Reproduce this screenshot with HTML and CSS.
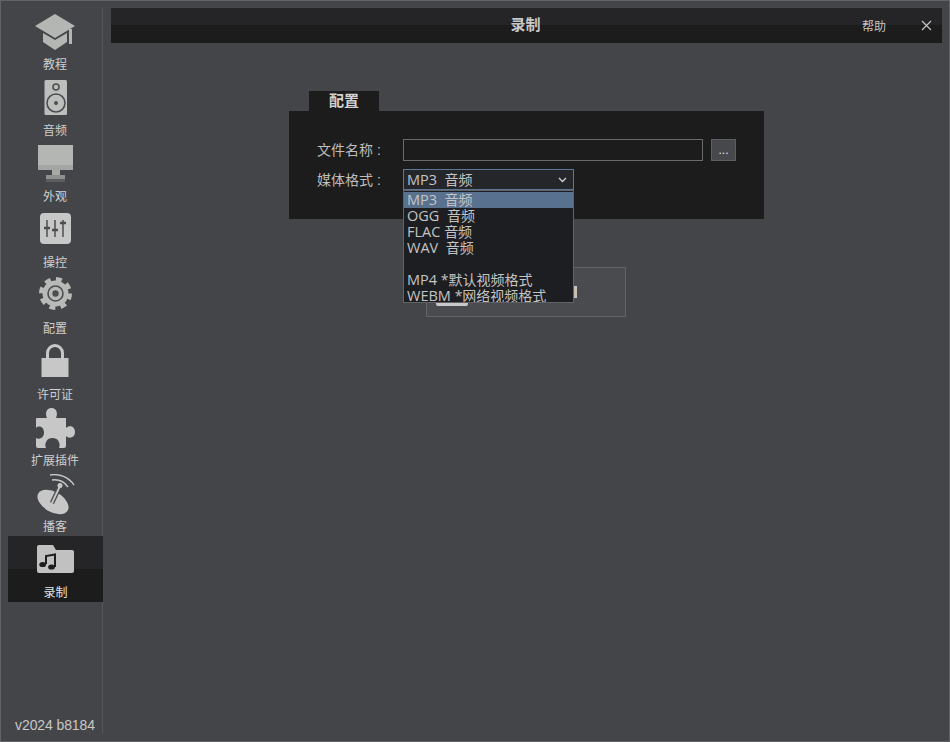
FILE: index.html
```html
<!DOCTYPE html>
<html lang="zh-CN">
<head>
  <meta charset="UTF-8">
  <title>录制</title>
  <link rel="stylesheet" href="styles.css">
</head>
<body>
  <div class="window">
    <nav class="sidebar">
      <div class="nav-list">
        <div class="nav-item">
          <svg class="nav-icon" viewBox="0 0 44 44"><path d="M22 2 L42 14 L22 26 L2 14 Z" fill="#b4b6b3"/><path d="M10 21 L22 28 L34 21 V30 L22 38 L10 30 Z" fill="#b4b6b3"/><rect x="36" y="17" width="3" height="15" fill="#b4b6b3"/></svg>
          <span>教程</span>
        </div>
        <div class="nav-item">
          <svg class="nav-icon" viewBox="0 0 44 44"><rect x="11.500" y="2" width="22.500" height="35" rx="1.500" fill="#bdbfbd"/><circle cx="23" cy="9" r="3" fill="none" stroke="#4c4d50" stroke-width="1.600"/><circle cx="23" cy="25" r="9" fill="none" stroke="#4c4d50" stroke-width="1.600"/><circle cx="23" cy="25" r="2" fill="#4c4d50"/></svg>
          <span>音频</span>
        </div>
        <div class="nav-item">
          <svg class="nav-icon" viewBox="0 0 44 44"><rect x="5" y="1" width="35" height="25" fill="#b4b6b3"/><rect x="5" y="21" width="35" height="5" fill="#a4a6a4"/><rect x="19" y="26" width="8" height="5" fill="#a8aaa8"/><rect x="13" y="31" width="19" height="4" fill="#8e908f"/><rect x="13" y="35" width="19" height="3" fill="#5c5d5f"/></svg>
          <span>外观</span>
        </div>
        <div class="nav-item">
          <svg class="nav-icon" viewBox="0 0 44 44"><rect x="7" y="3" width="31" height="31" rx="4" fill="#c6c7c6"/><path d="M14 10 V27 M22 10 V27 M30 10 V27" stroke="#4c4d50" stroke-width="1.500"/><path d="M11 18 H17 M19 20 H25 M27 13 H33" stroke="#4c4d50" stroke-width="2.500"/></svg>
          <span>操控</span>
        </div>
        <div class="nav-item">
          <svg class="nav-icon" viewBox="0 0 44 44"><circle cx="22.500" cy="17.500" r="13" fill="#b8bab8"/><circle cx="22.500" cy="17.500" r="14.500" fill="none" stroke="#b8bab8" stroke-width="4" stroke-dasharray="6 5.390"/><circle cx="22.500" cy="17.500" r="7.500" fill="none" stroke="#4c4d50" stroke-width="1.600"/><circle cx="22.500" cy="17.500" r="3.200" fill="#4c4d50"/></svg>
          <span>配置</span>
        </div>
        <div class="nav-item">
          <svg class="nav-icon" viewBox="0 0 44 44"><path d="M14.500 16 V11 A7.500 7.500 0 0 1 29.500 11 V16" fill="none" stroke="#c6c7c6" stroke-width="3"/><rect x="8.500" y="16" width="27" height="19" fill="#c6c7c6"/></svg>
          <span>许可证</span>
        </div>
        <div class="nav-item">
          <svg class="nav-icon" viewBox="0 0 44 44"><path d="M4 10 H14 C12 6 13 0 18.500 0 C24 0 25 6 23 10 H33 V20 C36 17 42 18 42 24 C42 30 36 31 33 28 V38 Q33 40 31 40 H26 C28 35 25 30 19.500 30 C14 30 11 35 13 40 H5 Q3 40 3 38 V30 C6 32 11 30 11 24.500 C11 19 6 17 3 20 V11 Q3 10 4 10 Z" fill="#c6c7c6"/></svg>
          <span>扩展插件</span>
        </div>
        <div class="nav-item">
          <svg class="nav-icon" viewBox="0 0 44 44"><ellipse cx="20" cy="28" rx="17" ry="10" transform="rotate(30 20 28)" fill="#c6c7c6"/><path d="M19 29 L27 12" stroke="#4c4d50" stroke-width="4.500"/><path d="M19 29 L27 12" stroke="#c6c7c6" stroke-width="1.800"/><circle cx="27" cy="11.500" r="2.500" fill="#c6c7c6"/><path d="M19 6 A17 17 0 0 1 35 13 M17 1 A24 24 0 0 1 41 11" fill="none" stroke="#c6c7c6" stroke-width="1.400"/></svg>
          <span>播客</span>
        </div>
        <div class="nav-item nav-item-active">
          <svg class="nav-icon" viewBox="0 0 44 44"><path d="M5 5 Q3 5 3 7 V31 Q3 33 5 33 H38 Q40 33 40 31 V12 Q40 10 38 10 H22 L19 5 Z" fill="#c0c1c0"/><path d="M12 24 V16 L21 14.500 V27" fill="none" stroke="#1e1e1f" stroke-width="2"/><ellipse cx="8.700" cy="24.500" rx="3.400" ry="2.600" fill="#1e1e1f"/><ellipse cx="17.500" cy="27" rx="3.400" ry="2.600" fill="#1e1e1f"/></svg>
          <span>录制</span>
        </div>
      </div>
      <div class="version">v2024 b8184</div>
    </nav>

    <main class="content">
      <header class="titlebar">
        <div class="title">录制</div>
        <div class="help">帮助</div>
        <svg class="close" viewBox="0 0 11 11"><path d="M1 1 L10 10 M10 1 L1 10" stroke="#c4c4c4" stroke-width="1.200"/></svg>
      </header>

      <section class="config">
        <div class="tab">配置</div>
        <div class="panel">
          <div class="row">
            <label>文件名称 :</label>
            <div class="text-input"></div>
            <button class="browse">...</button>
          </div>
          <div class="row">
            <label>媒体格式 :</label>
            <div class="select">
              <div class="select-box">
                <span><span class="latin">MP3&nbsp; </span>音频</span>
                <svg class="chevron" viewBox="0 0 9 6"><path d="M1 1 L4.500 4.500 L8 1" fill="none" stroke="#d0d0d0" stroke-width="1.300"/></svg>
              </div>
              <ul class="dropdown">
                <li class="selected"><span class="latin">MP3&nbsp; </span>音频</li>
                <li><span class="latin">OGG&nbsp; </span>音频</li>
                <li><span class="latin">FLAC </span>音频</li>
                <li><span class="latin">WAV&nbsp; </span>音频</li>
                <li>&nbsp;</li>
                <li><span class="latin">MP4 </span>*默认视频格式</li>
                <li><span class="latin">WEBM </span>*网络视频格式</li>
              </ul>
            </div>
          </div>
        </div>
        <div class="start-btn">
          <div class="start-mark"></div>
          <div class="start-glyph"></div>
        </div>
      </section>
    </main>
  </div>
</body>
</html>
```

FILE: styles.css
```css
* {
  box-sizing: border-box;
}

body {
  margin: 0;
  background-color: #444549;
  color: #c8c8c8;
  font-family: 'Liberation Sans', 'Noto Sans CJK SC', sans-serif;
  font-size: 12px;
  overflow: hidden;
}

.window {
  width: 950px;
  height: 742px;
  display: flex;
  border: 1px solid #626367;
  padding: 7px 7px 8px 7px;
}

.sidebar {
  width: 95px;
  flex: none;
  display: flex;
  flex-direction: column;
  justify-content: space-between;
  border-right: 1px solid #55565a;
}

.nav-list {
  display: flex;
  flex-direction: column;
}

.nav-item {
  height: 66px;
  display: flex;
  flex-direction: column;
  align-items: center;
  text-align: center;
  font-size: 12px;
  line-height: 16px;
  color: #cfcfcf;
}

.nav-icon {
  width: 44px;
  height: 44px;
  margin: 4px 0 0;
  flex: none;
  display: block;
}

.nav-item span {
  display: block;
  margin-top: 1px;
}

.nav-item-active {
  background: linear-gradient(#252527 50%, #1c1c1c 50%);
  width: 95px;
  color: #e4e4e4;
}

.version {
  text-align: center;
  font-size: 14px;
  letter-spacing: -0.1px;
  line-height: 16px;
  color: #c8c8c8;
}

.content {
  flex: 1;
  padding-left: 8px;
  min-width: 0;
}

.titlebar {
  height: 35px;
  display: flex;
  align-items: center;
  position: relative;
  background: linear-gradient(#252527 50%, #1c1c1c 50%);
  padding-right: 10px;
}

.title {
  position: absolute;
  left: 0;
  right: 2px;
  top: 7px;
  line-height: 20px;
  text-align: center;
  font-size: 15px;
  font-weight: bold;
  color: #c8c8c8;
}

.help {
  margin-left: auto;
  color: #c4c4c4;
  margin-right: 35px;
}

.close {
  width: 11px;
  height: 11px;
}

.config {
  width: 475px;
  margin: 48px 0 0 178px;
  display: flex;
  flex-direction: column;
}

.tab {
  width: 70px;
  height: 20px;
  margin-left: 20px;
  background-color: #1c1c1c;
  text-align: center;
  font-size: 15px;
  font-weight: bold;
  line-height: 20px;
  color: #d2d2d2;
}

.panel {
  height: 108px;
  background-color: #1c1c1c;
  padding: 28px 28px 0;
  display: flex;
  flex-direction: column;
  gap: 8px;
}

.row {
  display: flex;
  align-items: flex-start;
}

.row label {
  width: 86px;
  flex: none;
  font-size: 14px;
  line-height: 22px;
  color: #bebebe;
}

.text-input {
  width: 300px;
  height: 22px;
  border: 1px solid #6a6b6e;
  background-color: #1c1c1c;
}

.browse {
  width: 25px;
  height: 22px;
  margin-left: 8px;
  padding: 0;
  border: 1px solid #5c5d60;
  background-color: #47484c;
  color: #e4e4e4;
  font-family: inherit;
  font-size: 12px;
}

.select {
  width: 171px;
  position: relative;
}

.select-box {
  height: 21px;
  border: 1px solid #5b7696;
  background-color: #25262a;
  padding-left: 3px;
  padding-right: 6px;
  display: flex;
  align-items: center;
  justify-content: space-between;
  font-family: 'Open Sans', 'Noto Sans CJK SC', sans-serif;
  font-size: 14px;
  line-height: 16px;
  color: #c4c4c4;
}

.latin {
  font-size: 14.5px;
}

.chevron {
  width: 9px;
  height: 6px;
}

.dropdown {
  position: absolute;
  top: 21px;
  left: 0;
  width: 171px;
  height: 113px;
  margin: 0;
  padding: 1px 0 0;
  list-style: none;
  overflow: hidden;
  background-color: #1d1e21;
  border: 1px solid #626367;
  font-family: 'Open Sans', 'Noto Sans CJK SC', sans-serif;
  font-size: 14px;
  line-height: 16px;
  color: #c4c4c4;
  z-index: 2;
}

.dropdown li {
  padding-left: 3px;
  height: 16px;
  white-space: nowrap;
}

.dropdown .selected {
  background-color: #58718f;
}

.start-btn {
  width: 200px;
  height: 50px;
  margin: 48px 0 0 137px;
  border: 1px solid #626367;
  background-color: #4a4b4f;
  display: flex;
  align-items: flex-end;
  justify-content: space-between;
}

.start-mark {
  width: 32px;
  height: 3px;
  margin: 0 0 10px 9px;
  background-color: #c8c8c8;
  border-radius: 0 0 2px 2px;
}

.start-glyph {
  width: 3px;
  height: 12px;
  margin: 0 48px 18px 0;
  background-color: #c9bfb0;
}
```
